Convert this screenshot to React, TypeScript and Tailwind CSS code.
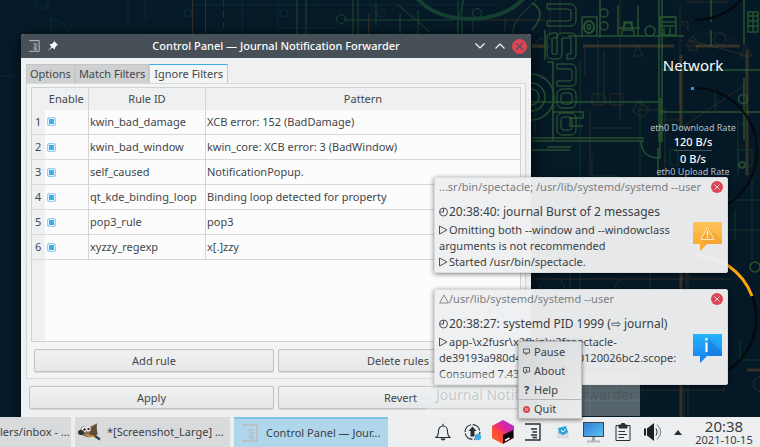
import React from "react";

const rules = [
  ["kwin_bad_damage", "XCB error: 152 (BadDamage)"],
  ["kwin_bad_window", "kwin_core: XCB error: 3 (BadWindow)"],
  ["self_caused", "NotificationPopup."],
  ["qt_kde_binding_loop", "Binding loop detected for property"],
  ["pop3_rule", "pop3"],
  ["xyzzy_regexp", "x[.]zzy"],
];

function JournalIcon({ className }: { className: string }) {
  return (
    <svg viewBox="0 0 16 18" className={className} fill="none" stroke="currentColor" strokeWidth="1.4">
      <path d="M0 1H15V17H0M6 6H12M7.500 9H12M6 12H12M7.500 14.500H12" />
    </svg>
  );
}

function CloseDot({ className }: { className: string }) {
  return (
    <svg viewBox="0 0 16 16" className={className}>
      <circle cx="8" cy="8" r="8" fill="#da4453" />
      <path d="M4.500 4.500 11.500 11.500M11.500 4.500 4.500 11.500" stroke="currentColor" strokeWidth="1.200" />
    </svg>
  );
}

function Wallpaper() {
  return (
    <svg className="absolute inset-0 h-full w-full" viewBox="0 0 760 417" preserveAspectRatio="xMidYMin slice" fill="none">
      <defs>
        <linearGradient id="night" x1="0" y1="0" x2="1" y2="0">
          <stop offset="0" stopColor="#061b29" />
          <stop offset="1" stopColor="#051825" />
        </linearGradient>
      </defs>
      <rect width="760" height="417" fill="url(#night)" />
      <g stroke="#0d3b43" opacity="0.55">
        <path d="M0 76H21M187 5H500M36 0V8H48V0M51 14V34M51 20Q66 20 70 34M128 0V30M145 0V20M242 0V34M278 0V28H340M371 0V30" />
        <circle cx="188" cy="13" r="4" />
        <circle cx="284" cy="13" r="4" />
        <circle cx="381" cy="13" r="4" />
      </g>
      <g stroke="#4a3b26" opacity="0.65">
        <path d="M192.500 0V34M205.500 0V34M223.500 0V7M223.500 10V18M223.500 22V28M368.500 14V34M473 20H545M473 20V32M505 18V32" />
      </g>
      <g stroke="#245c38" opacity="0.7">
        <path d="M297 0V34M306 0V34M353 0V34M358 0V34M376 2V26M345 20H455M458 0V34M462 0V34M397 4L430 32M400 14V34M418 10V34M464 0C461 12 456 20 458 34M536 0C528 10 516 14 512 34" />
        <circle cx="341" cy="19" r="4.500" />
        <circle cx="477" cy="13" r="4.500" />
      </g>
      <path d="M417 -2C440 26 500 26 524 -2" stroke="#143f31" strokeWidth="4" />

      <g stroke="#55452a" strokeWidth="3" opacity="0.6">
        <path d="M583 46H674M696 46H740M532 46H545M681 55V130M747 50V175M681 210V417M747 370H760" />
      </g>
      <g stroke="#5c4b2c" opacity="0.4">
        <path d="M550 0V40M560 0V36M620 0V120M680 5V120H665M681 128 745 85M585 48V75M688 40 745 55M590 110V176M637 110H665V176M632 128H590M738 120V175M540 78H546M686 2H728" />
        <path d="M693 40 698 50H688ZM638 46 643 56H633ZM693 36 700 46H686ZM746 46 752 56H740ZM541 38 550 47H532ZM682 22 688 30V22Z" />
        <rect x="592" y="94" width="13" height="11" rx="2" />
        <rect x="610" y="94" width="13" height="11" rx="2" />
        <rect x="634" y="104" width="13" height="11" rx="2" transform="rotate(30 640 110)" />
        <circle cx="720" cy="39" r="6" />
        <path d="M701 35A32 32 0 0 1 738 45" strokeDasharray="2 2" />
        <path d="M535 269H728M535 279H730M680 269 694 279M680 279 694 269M686 260V290" />
        <path d="M642 390H724M642 387V393M724 387V393M684 386V417" />
        <path d="M754 380 760 376M754 380V388L760 392M540 285V300M560 279Q570 290 560 300M620 279Q610 290 620 300" />
      </g>
      <g stroke="#356b35" strokeWidth="1.500" opacity="0.7">
        <path d="M532 3Q548 12 532 30M618 6V36M638 6V36M659 0V142M662 0V142M582 17H597V36H582ZM600 0V38M568 36H684M660 17H676V35H660ZM660 26H676" />
        <ellipse cx="589" cy="27" rx="5" ry="6" strokeWidth="2" />
        <ellipse cx="589" cy="27" rx="1.500" ry="2.500" />
        <ellipse cx="604" cy="13" rx="4" ry="4" />
        <ellipse cx="604" cy="26" rx="4" ry="4" />
        <ellipse cx="650" cy="31" rx="5" ry="5" />
        <path d="M622 36C622 18 634 18 634 36M618 28H640M624 22H632V30H624ZM532 138H644M532 141H644M547 62H553V140M530 102H660M660 112H760M661 98V140M641 140C641 155 650 158 660 158V132M658 148V176M547 147H571M711 0V22M711 30V46M744 0V45M744 78V140M663 70H760M532 150H570M545 30V60M553 112H583V118H570V126H583" />
        <rect x="748" y="12" width="10" height="20" />
        <path d="M748 16H758M748 21H758M748 26H758M753 12V32M662 17H676M662 22H676M664 28V35M670 28V35" />
        <circle cx="743" cy="99" r="4.500" />
        <circle cx="531" cy="97" r="23" />
        <circle cx="531" cy="97" r="14" />
        <circle cx="531" cy="97" r="8" />
        <circle cx="755" cy="267" r="5" />
        <circle cx="742" cy="165" r="3" />
      </g>
      <g stroke="#2f6237" strokeWidth="1">
        <path d="M547 4H570Q576 4 576 10V20Q576 26 570 26H547V21H568Q571 21 571 18V12Q571 9 568 9H547Z" />
        <path d="M553 33H557V38H552V54H557V38Q557 33 562 33H571Q576 33 576 38V54Q576 59 571 59H567V54H571V38H562V54Q562 59 557 59H552Q547 59 547 54V38Q547 33 553 33Z" />
        <path d="M557 64H571Q576 64 576 69V82Q576 86 571 86H557V81H569Q572 81 572 79V72Q572 69 570 69H557Z" />
        <rect x="557" y="89" width="19" height="19" rx="5" />
        <rect x="561" y="93" width="11" height="11" rx="3" />
        <rect x="557" y="113" width="19" height="22" rx="5" />
        <rect x="561" y="117" width="11" height="13" rx="3" />
      </g>
      <g stroke="#17462f" opacity="0.7">
        <path d="M580 60V417M598 40V102M604 50V102M640 100V176M592 155V176H620M535 102V130M650 176V290M570 260V300M545 386V417M688 250V417M740 340V360H760M700 70H730M715 90V112M690 230H760" />
        <path d="M663 125H684M740 124H748M670 150H678V165H670Z" />
        <path d="M540 400H640M590 386V417" />
        <path d="M738 150H752V166H738ZM728 200H760M735 210V240M752 176V260" />
      </g>

      <g strokeWidth="2.500">
        <path d="M695 20A63 63 0 0 0 741 0" stroke="#03090d" />
        <path d="M695 88A63 63 0 0 1 693 214" stroke="#03090d" strokeOpacity="0.85" />
        <path d="M752 295A63 63 0 0 1 693 381" stroke="#03090d" />
        <path d="M693 255A63 63 0 0 1 752 296" stroke="#ffa40d" strokeWidth="3" />
      </g>
      <rect x="691" y="87" width="3" height="3" fill="#1d99f3" />
    </svg>
  );
}

function Tab({ label, active }: { label: string; active?: boolean }) {
  return (
    <button
      role="tab"
      aria-selected={!!active}
      className={
        active
          ? "-mb-px h-5 border border-b-0 border-t-[#3daee9] border-x-[#c8cacc] bg-[#f4f5f5] px-1 pb-px"
          : "h-[19px] border border-b-0 border-[#c3c5c6] bg-[#cfd0d1] px-[3px]"
      }
    >
      {label}
    </button>
  );
}

const pushButton =
  "h-[23px] flex-1 rounded-[2px] border border-[#bfc1c3] bg-linear-to-b from-[#f0f1f2] to-[#e6e7e8] text-center shadow-[0_1px_0_rgba(0,0,0,0.1)]";

function ControlPanel() {
  return (
    <section className="absolute left-[21px] top-[34px] flex h-[383px] w-[510px] flex-col rounded-t-[3px] bg-[#eff0f1] text-[11px] leading-4 text-[#43474b] shadow-[0_4px_16px_rgba(0,0,0,0.75)]">
      <header className="flex h-6 items-center rounded-t-[3px] bg-[#475057] text-[#fcfcfc]">
        <div className="flex w-[60px] items-center gap-2 pl-2">
          <JournalIcon className="h-3 w-[11px] text-[#c6c9cb]" />
          <svg viewBox="0 0 10 10" className="size-[10px]" fill="#fcfcfc">
            <path d="M6 0 10 4 8.800 4.600 7.200 6.200 6.800 8.600 4.200 6.600 0 10 3.300 5.700 1.500 3.200 4 3 5.500 1.300Z" />
          </svg>
        </div>
        <h1 className="flex-1 text-center text-[11px] font-medium">Control Panel — Journal Notification Forwarder</h1>
        <div className="flex w-[60px] items-center justify-end gap-1 pr-[3px]">
          <button aria-label="Minimize" className="flex size-4 items-center justify-center">
            <svg viewBox="0 0 10 6" className="h-[6px] w-[10px]" fill="none" stroke="currentColor" strokeWidth="1.1">
              <path d="M0.500 0.500 5 5 9.500 0.500" />
            </svg>
          </button>
          <button aria-label="Maximize" className="flex size-4 items-center justify-center">
            <svg viewBox="0 0 10 6" className="h-[6px] w-[10px]" fill="none" stroke="currentColor" strokeWidth="1.1">
              <path d="M0.500 5.500 5 1 9.500 5.500" />
            </svg>
          </button>
          <button aria-label="Close" className="size-4">
            <CloseDot className="size-[15px] text-[#475057]" />
          </button>
        </div>
      </header>

      <div className="flex flex-1 flex-col px-[5px] pb-2 pt-[6px]">
        <div role="tablist" className="flex">
          <Tab label="Options" />
          <Tab label="Match Filters" />
          <Tab label="Ignore Filters" active />
        </div>
        <div className="flex flex-1 flex-col border border-[#d6d8d9] bg-[#f3f4f4] px-1 pb-[6px] pt-[3px]">
          <table className="w-full flex-1 table-fixed border-collapse border border-[#cfd1d3] bg-[#fcfcfc] text-left">
            <colgroup>
              <col className="w-[13px]" />
              <col className="w-11" />
              <col className="w-[117px]" />
              <col />
            </colgroup>
            <thead>
              <tr className="h-[22px] bg-[#eff0f1] text-center">
                <td />
                <th className="border-r border-[#d3d5d6] text-center font-normal">Enable</th>
                <th className="border-r border-[#d3d5d6] text-center font-normal">Rule ID</th>
                <th className="text-center font-normal">Pattern</th>
              </tr>
            </thead>
            <tbody>
              {rules.map(([id, pattern], i) => (
                <tr key={id} className="h-[25px] border-b border-[#d8dadb]">
                  <th className="bg-[#eff0f1] text-center font-normal">{i + 1}</th>
                  <td className="border-r border-[#d3d5d6] pl-[2px]">
                    <input
                      type="checkbox"
                      defaultChecked
                      aria-label={id}
                      className="block size-[9px] appearance-none rounded-[2px] border border-[#9ccdec] bg-white checked:bg-[#3daee9] checked:shadow-[inset_0_0_0_1px_#e6f3fb]"
                    />
                  </td>
                  <td className="border-r border-[#d3d5d6] pl-px">{id}</td>
                  <td className="pl-px">{pattern}</td>
                </tr>
              ))}
              <tr className="h-[82px]">
                <td className="bg-[#eff0f1]" />
                <td colSpan={3} />
              </tr>
            </tbody>
          </table>
          <div className="mt-[7px] flex gap-1 px-[3px]">
            <button className={pushButton}>Add rule</button>
            <button className={pushButton}>Delete rules</button>
          </div>
        </div>
        <div className="mt-[7px] flex gap-1 px-[3px]">
          <button className={pushButton}>Apply</button>
          <button className={pushButton}>Revert</button>
        </div>
      </div>
    </section>
  );
}

function NetworkWidget() {
  return (
    <section className="absolute left-[633px] top-[55px] flex w-[120px] flex-col items-center text-[#fcfcfc]">
      <h2 className="text-[15px] leading-5">Network</h2>
      <p className="mt-[47px] text-[9px] leading-3 text-[#b9bfc4]">eth0 Download Rate</p>
      <p className="border-b border-[#47525a] text-[11px] font-medium leading-4">120 B/s</p>
      <p className="text-[11px] font-medium leading-[15px]">0 B/s</p>
      <p className="text-[9px] leading-3 text-[#b9bfc4]">eth0 Upload Rate</p>
    </section>
  );
}

function BubbleIcon({ kind }: { kind: "warning" | "info" }) {
  const warning = kind === "warning";
  return (
    <svg viewBox="0 0 29 29" className="mb-[19px] h-[29px] w-[29px] shrink-0">
      <defs>
        <linearGradient id={kind} x1="0" y1="0" x2="0" y2="1">
          <stop offset="0" stopColor={warning ? "#ffc35a" : "#22b4fb"} />
          <stop offset="1" stopColor={warning ? "#f9a825" : "#1d7df0"} />
        </linearGradient>
      </defs>
      <path d="M0 0H29V22H14L7 29V22H0Z" fill={`url(#${kind})`} />
      {warning ? (
        <>
          <path d="M15 5 29 18V22H14L8 17.500Z" fill="#e8952a" opacity="0.35" />
          <path d="M14.500 5 21 17.500H8Z" fill="none" stroke="#fde7bd" />
          <path d="M14.500 9V13.500M14.500 14.800V16" stroke="#fff" strokeWidth="1.200" />
        </>
      ) : (
        <>
          <path d="M15 4 29 18V22H16L13 18Z" fill="#0f62c8" opacity="0.35" />
          <path d="M13.500 4V6.500M13.500 8.500V18" stroke="#fff" strokeWidth="2.200" />
        </>
      )}
    </svg>
  );
}

function Mark({ kind }: { kind: "clock" | "play" | "warn" }) {
  return (
    <svg viewBox="0 0 10 10" className="inline-block size-[10px] align-[-1px]" fill="none" stroke="currentColor" strokeWidth="0.9">
      {kind === "clock" && (
        <>
          <circle cx="4.500" cy="5" r="4" />
          <path d="M4.500 1V5H1" />
        </>
      )}
      {kind === "play" && <path d="M0.500 1 8 5 0.500 9Z" />}
      {kind === "warn" && <path d="M5 1 9.400 9H0.600Z" />}
    </svg>
  );
}

function Notification(props: {
  place: string;
  source: React.ReactNode;
  title: React.ReactNode;
  kind: "warning" | "info";
  children: React.ReactNode;
}) {
  return (
    <article
      className={`absolute left-[434px] w-[294px] rounded-[2px] border border-[#d9dbdc] bg-[#eeeff1]/97 pb-[2px] pl-1 pr-[5px] pt-px text-[11px] leading-4 text-[#3b3f43] shadow-[0_1px_5px_rgba(0,0,0,0.5)] ${props.place}`}
    >
      <header className="-mr-px flex items-center justify-between text-[#7a7e82]">
        <span className="whitespace-nowrap">{props.source}</span>
        <button aria-label="Dismiss" className="size-3">
          <CloseDot className="size-3 text-[#f6dfe1]" />
        </button>
      </header>
      <h3 className="mt-[7px] text-[12px] leading-5">{props.title}</h3>
      <div className="flex items-start justify-between">
        <div className="whitespace-nowrap">{props.children}</div>
        <BubbleIcon kind={props.kind} />
      </div>
    </article>
  );
}

function TrayMenu() {
  const item = "flex h-[19px] w-full items-center gap-1 pl-1 text-left";
  return (
    <nav className="absolute left-[518px] top-[341px] w-16 border border-[#b9bbbd] bg-linear-to-br from-[#d4d6d8] to-[#eceded] text-[11px] leading-4 text-[#3b3f43] shadow-[0_1px_4px_rgba(0,0,0,0.5)]">
      <button className={item}>
        <svg viewBox="0 0 7 7" className="size-[7px]" fill="none" stroke="currentColor" strokeWidth="0.8">
          <path d="M0.500 1H6.500V5H0.500ZM3 5V6.500L4.500 5" />
        </svg>
        Pause
      </button>
      <button className={item}>
        <svg viewBox="0 0 7 7" className="size-[7px]" fill="none" stroke="currentColor" strokeWidth="0.8">
          <path d="M2 6.500V5H0.500V0.500H6.500V5H4L2 6.500M3.500 1.500V4M2.500 4H4.500" />
        </svg>
        About
      </button>
      <button className={item}>
        <span className="w-[7px] text-center font-bold">?</span>
        Help
      </button>
      <button className={`${item} border-t border-[#b4b6b8]`}>
        <CloseDot className="size-[7px] text-white" />
        Quit
      </button>
    </nav>
  );
}

function GimpIcon() {
  return (
    <svg viewBox="0 0 24 18" className="h-[18px] w-6 shrink-0">
      <path d="M3 5 5 3 8 4.500C12 4 15 2 19 0.500Q18 4 19.500 11C16 15 10 15 6 13L1 11Z" fill="#85705a" />
      <path d="M13 5 19 0.500Q18 4 19.500 11C17 14 13 14 11 13Z" fill="#5f4d3a" />
      <ellipse cx="6" cy="6.500" rx="2.300" ry="2.800" fill="#fff" />
      <ellipse cx="10.500" cy="6" rx="2.300" ry="2.600" fill="#fff" />
      <circle cx="6.500" cy="6.500" r="1.200" fill="#222" />
      <circle cx="10.500" cy="6" r="1.200" fill="#222" />
      <ellipse cx="3" cy="9.500" rx="3" ry="2.400" fill="#2a3335" />
      <path d="M8 12 18 14" stroke="#d79a3c" strokeWidth="1.400" />
      <path d="M17 13 22 16.500" stroke="#2c4252" strokeWidth="2.200" />
    </svg>
  );
}

function TrayButton({ label, children }: { label: string; children: React.ReactNode }) {
  return (
    <button aria-label={label} className="flex h-full w-[30px] shrink-0 items-center justify-center">
      {children}
    </button>
  );
}

function Taskbar() {
  const task = "flex h-full shrink-0 items-center overflow-hidden whitespace-nowrap";
  return (
    <footer className="flex h-[30px] shrink-0 items-center bg-[#eceef0] text-[11px] leading-4 text-[#3b3f43]">
      <div className="flex h-full gap-1">
        <button className={`${task} w-[71px] bg-[#d9dadb]`}>lers/inbox - ...</button>
        <button className={`${task} w-[155px] gap-[5px] bg-[#d9dadb] pl-[3px]`}>
          <GimpIcon />
          *[Screenshot_Large] ...
        </button>
        <button className={`${task} w-[154px] gap-2 border-t-2 border-[#7cc4ec] bg-[#b0d6ec] pl-2`}>
          <JournalIcon className="h-[18px] w-4 text-[#b9bcbe]" />
          Control Panel — Jour...
        </button>
      </div>
      <div className="ml-auto flex h-full items-center">
        <TrayButton label="Notifications">
          <svg viewBox="0 0 16 18" className="h-[18px] w-4" fill="none" stroke="#2b2f32" strokeWidth="1.1">
            <path d="M1 14.500C3 13 3.500 11 3.500 8C3.500 5 5.500 3 8 3C10.500 3 12.500 5 12.500 8C12.500 11 13 13 15 14.500Z" />
            <path d="M8 3V0.800" />
            <path d="M5.500 15.500H10.500Q10 17.500 8 17.500Q6 17.500 5.500 15.500Z" fill="#2b2f32" stroke="none" />
          </svg>
        </TrayButton>
        <TrayButton label="Updates">
          <svg viewBox="0 0 18 18" className="size-[18px]" fill="none">
            <circle cx="8.500" cy="9" r="7.400" stroke="#2b2f32" strokeWidth="1.2" strokeDasharray="10 1.600" />
            <path d="M8.500 3.500 12.500 8H10.500V13.500H6.500V8H4.500Z" fill="#2b2f32" />
            <circle cx="14" cy="14" r="3.200" fill="#3daee9" />
          </svg>
        </TrayButton>
        <TrayButton label="Toolbox">
          <svg viewBox="0 0 22 24" className="h-6 w-[22px]">
            <defs>
              <linearGradient id="cube" x1="0" y1="1" x2="1" y2="0">
                <stop offset="0" stopColor="#ff7a1f" />
                <stop offset="0.35" stopColor="#fb3b4c" />
                <stop offset="0.65" stopColor="#e0249a" />
                <stop offset="1" stopColor="#8a3cf5" />
              </linearGradient>
            </defs>
            <path d="M11 0 22 6V18L11 24 0 18V6Z" fill="url(#cube)" />
            <path d="M0 6 11 12V24L0 18Z" fill="#ff5a2b" opacity="0.45" />
            <path d="M11 15 21 10V18L11 23.500Z" fill="#050505" />
            <path d="M11 15 21 10V12L11 17Z" fill="#1c0a1c" />
            <path d="M13 20.500 17.500 18" stroke="#fff" strokeWidth="1.500" />
          </svg>
        </TrayButton>
        <TrayButton label="Journal">
          <JournalIcon className="h-[18px] w-4 text-[#2b2f32]" />
        </TrayButton>
        <TrayButton label="Mail">
          <svg viewBox="0 0 12 12" className="size-3">
            <path d="M1 5 6 1 11 5V12H1Z" fill="#b9c9d3" />
            <path d="M1 2 9 0 11 6 6 9.500 2 7Z" fill="#2fa4e0" />
            <path d="M4 4 6 6 8.500 3" stroke="#fff" fill="none" />
            <path d="M1 6.500 6 9.500 11 6.500V12H1Z" fill="#dde3e7" stroke="#aab7bf" strokeWidth="0.5" />
          </svg>
        </TrayButton>
        <TrayButton label="Display">
          <svg viewBox="0 0 21 21" className="size-[21px]">
            <defs>
              <linearGradient id="screen" x1="0" y1="0" x2="1" y2="1">
                <stop offset="0" stopColor="#2d7fd3" />
                <stop offset="1" stopColor="#5fc0f3" />
              </linearGradient>
            </defs>
            <rect x="0" y="0" width="21" height="15" fill="#3a454d" />
            <rect x="1" y="1" width="19" height="13" fill="url(#screen)" />
            <path d="M9 15H12V19H9Z" fill="#9ba3a8" />
            <path d="M4 18.500H17V20.500H4Z" fill="#b3b9bd" />
          </svg>
        </TrayButton>
        <TrayButton label="Clipboard">
          <svg viewBox="0 0 16 18" className="h-[18px] w-4" fill="none" stroke="#2b2f32">
            <path d="M1 2.500H15V17.500H1Z" />
            <path d="M4 2H6.500V0.500H9.500V2H12V5H4Z" fill="#2b2f32" />
            <path d="M3.500 8.500H10M3.500 11.500H12M3.500 14.500H9" strokeWidth="1.1" />
          </svg>
        </TrayButton>
        <TrayButton label="Volume">
          <svg viewBox="0 0 18 18" className="size-[18px]" fill="none" stroke="#1d2022">
            <path d="M3 5.500 10 0V18L3 12.500Z" fill="#1d2022" stroke="none" />
            <path d="M1 5.500V12.500" strokeWidth="2" />
            <path d="M12 5.500Q14.500 9 12 12.500" />
            <path d="M13 1.500Q20.500 9 13 16.500" stroke="#777c80" />
          </svg>
        </TrayButton>
        <button aria-label="Show hidden icons" className="flex w-5 justify-center">
          <svg viewBox="0 0 8 5" className="h-[5px] w-2" fill="#2b2f32">
            <path d="M4 0 8 5H0Z" />
          </svg>
        </button>
        <time className="w-[72px] text-center">
          <span className="block text-[15px] leading-[15px]">20:38</span>
          <span className="block text-[11px] leading-3">2021-10-15</span>
        </time>
      </div>
    </footer>
  );
}

export default function App() {
  return (
    <div className="relative flex h-screen flex-col overflow-hidden bg-[#061a27] font-['Noto_Sans',sans-serif]">
      <main className="relative flex-1 overflow-hidden">
        <Wallpaper />
        <NetworkWidget />
        <ControlPanel />
        <Notification
          place="top-[177px]"
          kind="warning"
          source="...sr/bin/spectacle; /usr/lib/systemd/systemd --user"
          title={<><Mark kind="clock" />20:38:40: journal Burst of 2 messages</>}
        >
          <p><Mark kind="play" />Omitting both --window and --windowclass</p>
          <p>arguments is not recommended</p>
          <p><Mark kind="play" />Started /usr/bin/spectacle.</p>
        </Notification>
        <Notification
          place="top-[289px]"
          kind="info"
          source={<><Mark kind="warn" />/usr/lib/systemd/systemd --user</>}
          title={<><Mark kind="clock" />20:38:27: systemd PID 1999 (⇨ journal)</>}
        >
          <p><Mark kind="play" />app-\x2fusr\x2fbin\x2fspectacle-</p>
          <p>de39193a980d4ba7ae3c4b0120026bc2.scope:</p>
          <p>Consumed 7.43s CPU time.</p>
        </Notification>
        <div className="absolute left-[426px] top-[373px] h-[43px] w-[214px] whitespace-nowrap bg-[#eff0f1]/35 pl-[10px] pt-3 text-[14px] leading-5 text-[#232629]/20">
          Journal Notification Forwarder
        </div>
      </main>
      <Taskbar />
      <TrayMenu />
    </div>
  );
}
